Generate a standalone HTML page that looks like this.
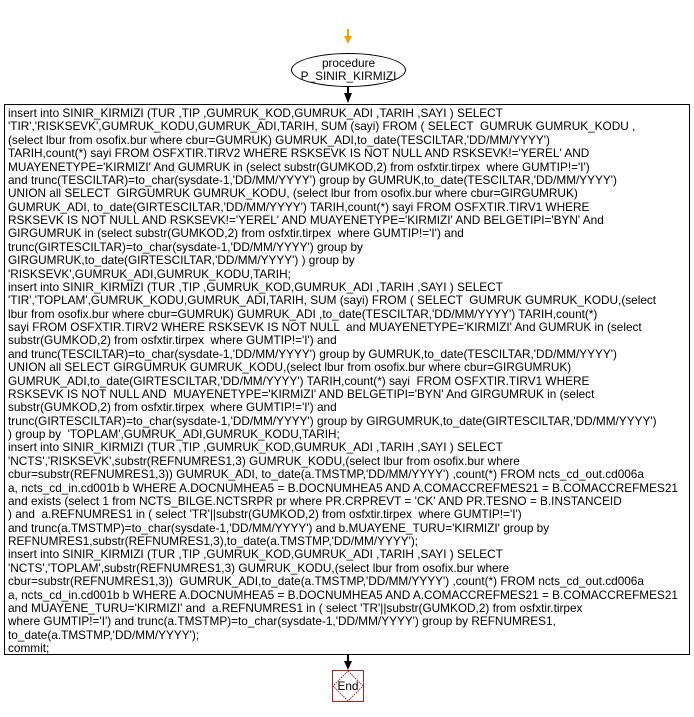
<!DOCTYPE html>
<html><head><meta charset="utf-8"><style>
body{margin:0;width:694px;height:717px;background:#fff;position:relative;overflow:hidden;font-family:"Liberation Sans",Arial,sans-serif;}
.box{position:absolute;left:4px;top:104px;width:686px;height:551px;border:1px solid #000;box-sizing:border-box;}
.txt{position:absolute;left:8px;top:107px;font-size:11.8px;line-height:13.375px;white-space:pre;color:#000;}
.ell{position:absolute;left:291px;top:53px;width:115px;height:34px;border:1px solid #000;border-radius:50%;box-sizing:border-box;font-size:11.8px;line-height:13px;text-align:center;padding-top:3px;white-space:nowrap;}
</style></head><body>
<svg width="694" height="717" style="position:absolute;left:0;top:0">
<line x1="348" y1="29" x2="348" y2="38" stroke="#f5a000" stroke-width="2"/>
<polygon points="344,36 352,36 348,44" fill="#f5a000"/>
<line x1="348" y1="87" x2="348" y2="96" stroke="#000" stroke-width="2"/>
<polygon points="344,93 352,93 348,103" fill="#000"/>
<line x1="348" y1="655" x2="348" y2="664" stroke="#000" stroke-width="2"/>
<polygon points="344,661 352,661 348,670" fill="#000"/>
<rect x="332.5" y="670.5" width="31" height="31" fill="none" stroke="#b22222" stroke-width="1"/>
<polygon points="348,671 363,686 348,701 333,686" fill="none" stroke="#b22222" stroke-width="1" stroke-dasharray="1.5,1"/>
<text x="348" y="690" font-family="Liberation Sans, Arial, sans-serif" font-size="11.8" text-anchor="middle">End</text>
</svg>
<div class="ell">procedure<br>P_SINIR_KIRMIZI</div>
<div class="box"></div>
<div class="txt">insert into SINIR_KIRMIZI (TUR ,TIP ,GUMRUK_KOD,GUMRUK_ADI ,TARIH ,SAYI ) SELECT
'TIR','RISKSEVK',GUMRUK_KODU,GUMRUK_ADI,TARIH, SUM (sayi) FROM ( SELECT  GUMRUK GUMRUK_KODU ,
(select lbur from osofix.bur where cbur=GUMRUK) GUMRUK_ADI,to_date(TESCILTAR,'DD/MM/YYYY')
TARIH,count(*) sayi FROM OSFXTIR.TIRV2 WHERE RSKSEVK IS NOT NULL AND RSKSEVK!='YEREL' AND
MUAYENETYPE='KIRMIZI' And GUMRUK in (select substr(GUMKOD,2) from osfxtir.tirpex  where GUMTIP!='I')
and trunc(TESCILTAR)=to_char(sysdate-1,'DD/MM/YYYY') group by GUMRUK,to_date(TESCILTAR,'DD/MM/YYYY')
UNION all SELECT  GIRGUMRUK GUMRUK_KODU, (select lbur from osofix.bur where cbur=GIRGUMRUK)
GUMRUK_ADI, to_date(GIRTESCILTAR,'DD/MM/YYYY') TARIH,count(*) sayi FROM OSFXTIR.TIRV1 WHERE
RSKSEVK IS NOT NULL AND RSKSEVK!='YEREL' AND MUAYENETYPE='KIRMIZI' AND BELGETIPI='BYN' And
GIRGUMRUK in (select substr(GUMKOD,2) from osfxtir.tirpex  where GUMTIP!='I') and
trunc(GIRTESCILTAR)=to_char(sysdate-1,'DD/MM/YYYY') group by
GIRGUMRUK,to_date(GIRTESCILTAR,'DD/MM/YYYY') ) group by
'RISKSEVK',GUMRUK_ADI,GUMRUK_KODU,TARIH;
insert into SINIR_KIRMIZI (TUR ,TIP ,GUMRUK_KOD,GUMRUK_ADI ,TARIH ,SAYI ) SELECT
'TIR','TOPLAM',GUMRUK_KODU,GUMRUK_ADI,TARIH, SUM (sayi) FROM ( SELECT  GUMRUK GUMRUK_KODU,(select
lbur from osofix.bur where cbur=GUMRUK) GUMRUK_ADI ,to_date(TESCILTAR,'DD/MM/YYYY') TARIH,count(*)
sayi FROM OSFXTIR.TIRV2 WHERE RSKSEVK IS NOT NULL  and MUAYENETYPE='KIRMIZI' And GUMRUK in (select
substr(GUMKOD,2) from osfxtir.tirpex  where GUMTIP!='I') and
and trunc(TESCILTAR)=to_char(sysdate-1,'DD/MM/YYYY') group by GUMRUK,to_date(TESCILTAR,'DD/MM/YYYY')
UNION all SELECT GIRGUMRUK GUMRUK_KODU,(select lbur from osofix.bur where cbur=GIRGUMRUK)
GUMRUK_ADI,to_date(GIRTESCILTAR,'DD/MM/YYYY') TARIH,count(*) sayi  FROM OSFXTIR.TIRV1 WHERE
RSKSEVK IS NOT NULL AND  MUAYENETYPE='KIRMIZI' AND BELGETIPI='BYN' And GIRGUMRUK in (select
substr(GUMKOD,2) from osfxtir.tirpex  where GUMTIP!='I') and
trunc(GIRTESCILTAR)=to_char(sysdate-1,'DD/MM/YYYY') group by GIRGUMRUK,to_date(GIRTESCILTAR,'DD/MM/YYYY')
) group by  'TOPLAM',GUMRUK_ADI,GUMRUK_KODU,TARIH;
insert into SINIR_KIRMIZI (TUR ,TIP ,GUMRUK_KOD,GUMRUK_ADI ,TARIH ,SAYI ) SELECT
'NCTS','RISKSEVK',substr(REFNUMRES1,3) GUMRUK_KODU,(select lbur from osofix.bur where
cbur=substr(REFNUMRES1,3)) GUMRUK_ADI, to_date(a.TMSTMP,'DD/MM/YYYY') ,count(*) FROM ncts_cd_out.cd006a
a, ncts_cd_in.cd001b b WHERE A.DOCNUMHEA5 = B.DOCNUMHEA5 AND A.COMACCREFMES21 = B.COMACCREFMES21
and exists (select 1 from NCTS_BILGE.NCTSRPR pr where PR.CRPREVT = 'CK' AND PR.TESNO = B.INSTANCEID
) and  a.REFNUMRES1 in ( select 'TR'||substr(GUMKOD,2) from osfxtir.tirpex  where GUMTIP!='I')
and trunc(a.TMSTMP)=to_char(sysdate-1,'DD/MM/YYYY') and b.MUAYENE_TURU='KIRMIZI' group by
REFNUMRES1,substr(REFNUMRES1,3),to_date(a.TMSTMP,'DD/MM/YYYY');
insert into SINIR_KIRMIZI (TUR ,TIP ,GUMRUK_KOD,GUMRUK_ADI ,TARIH ,SAYI ) SELECT
'NCTS','TOPLAM',substr(REFNUMRES1,3) GUMRUK_KODU,(select lbur from osofix.bur where
cbur=substr(REFNUMRES1,3))  GUMRUK_ADI,to_date(a.TMSTMP,'DD/MM/YYYY') ,count(*) FROM ncts_cd_out.cd006a
a, ncts_cd_in.cd001b b WHERE A.DOCNUMHEA5 = B.DOCNUMHEA5 AND A.COMACCREFMES21 = B.COMACCREFMES21
and MUAYENE_TURU='KIRMIZI' and  a.REFNUMRES1 in ( select 'TR'||substr(GUMKOD,2) from osfxtir.tirpex
where GUMTIP!='I') and trunc(a.TMSTMP)=to_char(sysdate-1,'DD/MM/YYYY') group by REFNUMRES1,
to_date(a.TMSTMP,'DD/MM/YYYY');
commit;</div>
</body></html>
